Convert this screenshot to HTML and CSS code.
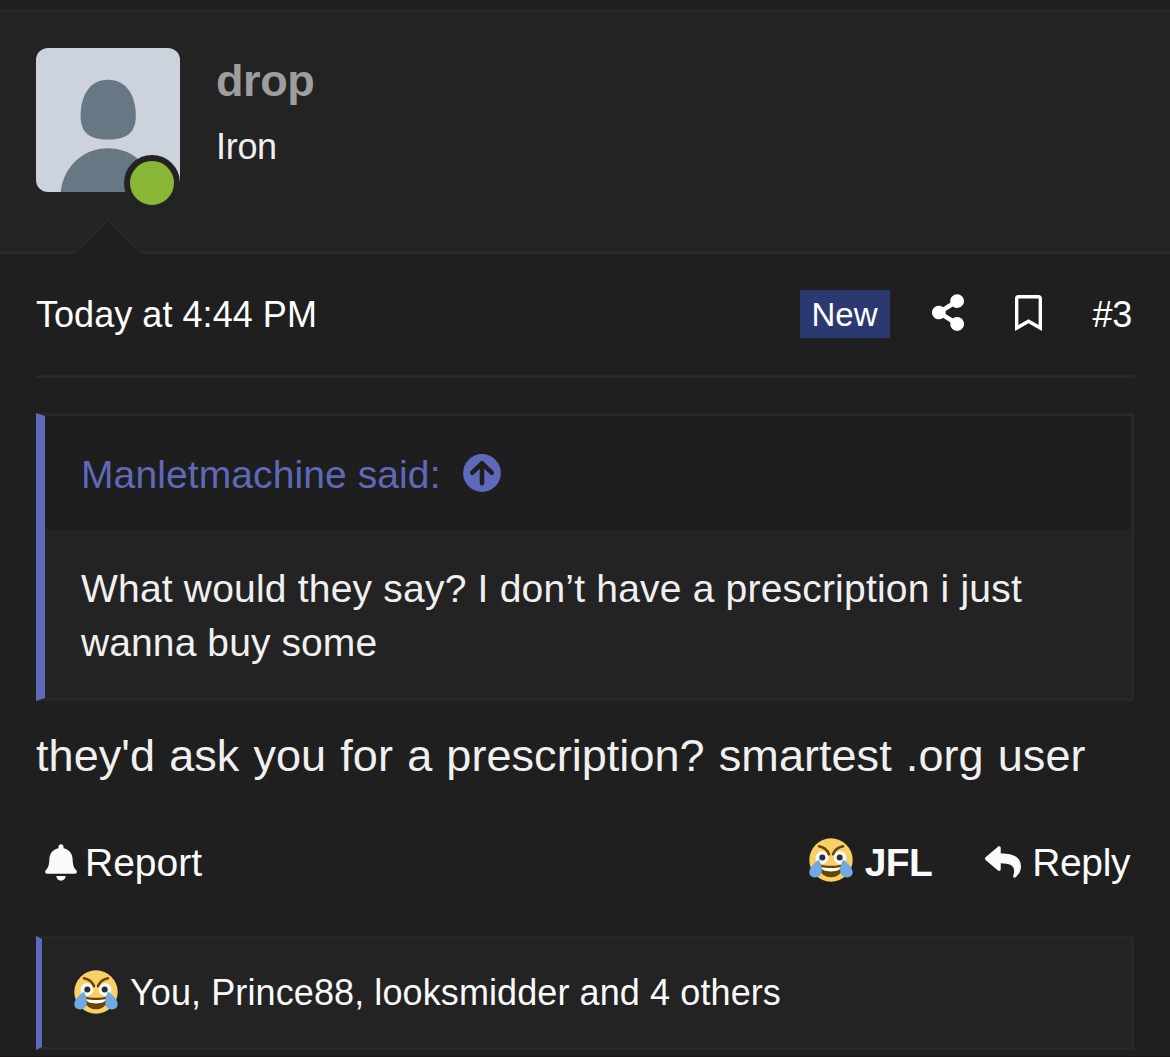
FILE: index.html
```
<!DOCTYPE html>
<html lang="en">
<head>
    <meta charset="UTF-8">
    <meta name="viewport" content="width=device-width, initial-scale=1.0">
    <title>Thread</title>
    <link rel="stylesheet" href="styles.css">
</head>
<body>
    <!-- Shared reaction face -->
    <svg width="0" height="0" class="sprites">
        <symbol id="jfl" viewBox="0 0 44 44">
            <circle cx="22" cy="22" r="21.700" fill="#f9d066"/>
            <circle cx="13" cy="19.500" r="6.500" fill="#f5f8fa"/>
            <circle cx="31" cy="19.500" r="6.500" fill="#f5f8fa"/>
            <path d="M10 8.300c4.500 1 8.500 4 10 8M34 8.300c-4.500 1-8.500 4-10 8" fill="none" stroke="#664500" stroke-width="2.500" stroke-linecap="round"/>
            <circle cx="13.300" cy="19.500" r="3" fill="#292f33"/>
            <circle cx="30.700" cy="19.500" r="3" fill="#292f33"/>
            <path d="M10.500 26.500c7 1.800 16 1.800 23 0 1 6-2.500 12.700-11.500 12.700S9.500 32.500 10.500 26.500z" fill="#664500"/>
            <path d="M12 29c6 1.300 14 1.300 20 0-.5 2.700-3.500 4.400-10 4.400s-9.500-1.700-10-4.400z" fill="#fff"/>
            <path d="M10 21.500C5 25 .3 30 .3 34.300c0 3 2.200 5.200 5.700 5.200 4 0 6.900-3 6.900-7.500 0-3.500-1.400-7-2.900-10.500zM34 21.500C39 25 43.700 30 43.700 34.300c0 3-2.200 5.200-5.700 5.200-4 0-6.900-3-6.900-7.500 0-3.500 1.400-7 2.900-10.500z" fill="#71a9e4"/>
        </symbol>
    </svg>

    <div class="post">
        <div class="user">
            <div class="avatar">
                <svg viewBox="0 0 144 144" width="144" height="144">
                    <path d="M72 31.700c18 0 27.800 15 27.800 36.300 0 17-9.500 23.500-27.800 23.500S44.600 85 44.600 68C44.600 46.700 54 31.700 72 31.700z"/>
                    <path d="M24.700 144C27 119 47 100.200 72 100.200S117 119 119.300 144z"/>
                </svg>
                <span class="online"></span>
            </div>
            <div class="user-info">
                <a class="username">drop</a>
                <span class="user-title">Iron</span>
            </div>
            <svg class="arrow" width="68" height="35" viewBox="0 0 68 35">
                <path d="M0 35L34 1l34 34z" fill="#1f1f1f"/>
                <path d="M1 33.500L34 1l33 32.500" fill="none" stroke="#282828" stroke-width="2"/>
            </svg>
        </div>

        <div class="message">
            <div class="message-header">
                <a class="date">Today at 4:44 PM</a>
                <span class="new">New</span>
                <svg class="share" width="32" height="37" viewBox="0 0 448 512"><path fill="#fff" d="M352 320c-22.608 0-43.387 7.819-59.790 20.895l-102.486-64.054a96.551 96.551 0 0 0 0-41.683l102.486-64.054C308.613 184.181 329.392 192 352 192c53.019 0 96-42.981 96-96S405.019 0 352 0s-96 42.981-96 96c0 7.158.790 14.130 2.276 20.841L155.790 180.895C139.387 167.819 118.608 160 96 160c-53.019 0-96 42.981-96 96s42.981 96 96 96c22.608 0 43.387-7.819 59.790-20.895l102.486 64.054A96.301 96.301 0 0 0 256 416c0 53.019 42.981 96 96 96s96-42.981 96-96-42.981-96-96-96z"/></svg>
                <svg class="bookmark" width="27" height="36" viewBox="0 0 384 512"><path fill="#fff" d="M336 0H48C21.490 0 0 21.490 0 48v464l192-112 192 112V48c0-26.510-21.490-48-48-48zm0 428.430l-144-84-144 84V54a6 6 0 0 1 6-6h276c3.314 0 6 2.683 6 5.996V428.430z"/></svg>
                <a class="number">#3</a>
            </div>

            <div class="quote">
                <div class="quote-title">
                    <a>Manletmachine said:</a>
                    <svg width="38" height="38" viewBox="0 0 38 38">
                        <circle cx="19" cy="19" r="18.900" fill="#5f69b9"/>
                        <path d="M9.300 18.700L19 9.300l9.700 9.400M19 10v19.300" fill="none" stroke="#1e1e1e" stroke-width="4.600" stroke-linecap="round" stroke-linejoin="round"/>
                    </svg>
                </div>
                <div class="quote-content">
                    <div class="line1">What would they say? I don’t have a prescription i just</div>
                    <div class="line2">wanna buy some</div>
                </div>
            </div>

            <div class="text">they'd ask you for a prescription? smartest .org user</div>

            <div class="actions">
                <a class="report">
                    <svg width="32" height="37" viewBox="0 0 32 37">
                        <path fill="#fafafa" d="M16 .3c1.500 0 2.500 1.100 2.500 2.500v1.500C24.200 5.500 27.300 9.500 27.600 15c.3 5.500.8 8.300 3.500 11 1.400 1.500.9 3.700-1.100 3.700H2c-2 0-2.500-2.200-1.100-3.700 2.700-2.700 3.200-5.500 3.500-11 .3-5.500 3.400-9.500 9.100-10.700V2.800C13.500 1.400 14.500.3 16 .3zM11.300 32h9.400c-.3 2.800-2.200 4.700-4.700 4.700s-4.400-1.900-4.700-4.700z"/>
                    </svg>
                    <span>Report</span>
                </a>
                <a class="react">
                    <svg width="44" height="44"><use href="#jfl"/></svg>
                    <b>JFL</b>
                </a>
                <a class="reply">
                    <svg width="36" height="36" viewBox="0 0 512 512"><path fill="#fafafa" d="M8.309 189.836L184.313 37.851C199.719 24.546 224 35.347 224 56.015v80.053c160.629 1.839 288 34.032 288 186.258 0 61.441-39.581 122.309-83.333 154.132-13.653 9.931-33.111-2.533-28.077-18.631 45.344-145.012-21.507-183.510-176.590-185.742V360c0 20.700-24.300 31.453-39.687 18.164l-176.004-152c-11.071-9.562-11.086-26.753 0-36.328z"/></svg>
                    <span>Reply</span>
                </a>
            </div>

            <div class="reactions">
                <svg width="44" height="44"><use href="#jfl"/></svg>
                <a>You, Prince88, looksmidder and 4 others</a>
            </div>
        </div>
    </div>
</body>
</html>
```
FILE: styles.css
```
body {
    margin: 0;
    background-color: #1f1f1f;
    color: #fafafa;
    font-family: "Liberation Sans", Arial, sans-serif;
    overflow: hidden;
}

svg {
    display: block;
    flex: none;
}

.sprites {
    position: absolute;
}

.post {
    margin-top: 9px;
    padding-bottom: 6px;
    border-top: 3px solid #282828;
    border-bottom: 1px solid #1a1417;
}

.user {
    position: relative;
    display: flex;
    gap: 36px;
    height: 203px;
    padding: 36px 36px 0;
    background-color: #232323;
    border-bottom: 3px solid #282828;
}

.avatar {
    position: relative;
    width: 144px;
    height: 144px;
}

.avatar svg {
    background-color: #ccd3dc;
    border-radius: 12px;
    fill: #677783;
}

/* Online marker over the avatar corner */
.online {
    position: absolute;
    left: 88px;
    top: 107px;
    width: 44px;
    height: 44px;
    border: 6px solid #232323;
    border-radius: 50%;
    background-color: #8ab636;
}

.user-info {
    display: flex;
    flex-direction: column;
    line-height: 66px;
}

.username {
    color: #9e9e9e;
    font-size: 45px;
    font-weight: bold;
    letter-spacing: -0.4px;
}

.user-title {
    font-size: 36px;
    letter-spacing: -0.3px;
    color: #f0f0f0;
}

.arrow {
    position: absolute;
    left: 74px;
    bottom: -3px;
}

.message {
    padding: 0 36px;
}

.message-header {
    display: flex;
    align-items: center;
    height: 121px;
    padding-right: 2px;
    border-bottom: 3px solid #282828;
    font-size: 36px;
    color: #fff;
}

.date {
    margin-right: auto;
    letter-spacing: 0.05px;
}

.new {
    box-sizing: border-box;
    width: 90px;
    height: 48px;
    margin-bottom: 2px;
    background-color: #2b3970;
    font-size: 33px;
    line-height: 50px;
    text-align: center;
}

.share {
    margin-left: 42px;
    margin-bottom: 4px;
}

.bookmark {
    margin-left: 51px;
    margin-bottom: 4px;
}

.number {
    margin-left: 51px;
    letter-spacing: -0.3px;
}

.quote {
    margin-top: 35px;
    border: 3px solid #282828;
    border-left: 9px solid #5f69b9;
    font-size: 39px;
}

.quote-title {
    display: flex;
    align-items: center;
    gap: 22px;
    height: 114px;
    padding: 0 36px;
    background-color: #1e1e1e;
    color: #5f69b9;
    letter-spacing: 0.1px;
}

.quote-title a {
    padding-top: 3px;
}

.quote-content {
    height: 136px;
    padding: 32px 36px 0;
    background-color: #232323;
    line-height: 54px;
    white-space: nowrap;
    color: #f0f0f0;
    letter-spacing: 0.1px;
}

.quote-content .line1 {
    letter-spacing: 0.2px;
}

.text {
    margin-top: 23px;
    font-size: 45px;
    line-height: 63px;
    white-space: nowrap;
    color: #f0f0f0;
    letter-spacing: 0.05px;
    word-spacing: 1.6px;
}

.actions {
    display: flex;
    align-items: center;
    height: 54px;
    margin-top: 49px;
    padding: 0 4px 0 9px;
    font-size: 39px;
}

.actions a {
    display: flex;
    align-items: center;
}

.report {
    gap: 8px;
    margin-right: auto;
}

.report svg {
    margin-bottom: 1px;
}

.react {
    gap: 12px;
}

.react svg {
    margin-bottom: 6px;
}

.react b {
    letter-spacing: -0.6px;
}

.reply {
    gap: 11px;
    margin-left: 53px;
    letter-spacing: -0.4px;
}

.reply svg {
    margin-bottom: 2px;
}

.reactions {
    display: flex;
    align-items: center;
    gap: 12px;
    height: 108px;
    margin-top: 46px;
    padding-left: 32px;
    border: 3px solid #282828;
    border-left: 6px solid #5f69b9;
    background-color: #232323;
    font-size: 36px;
}

.reactions svg {
    margin-bottom: 3px;
}

.reactions a {
    letter-spacing: 0.1px;
}
```
